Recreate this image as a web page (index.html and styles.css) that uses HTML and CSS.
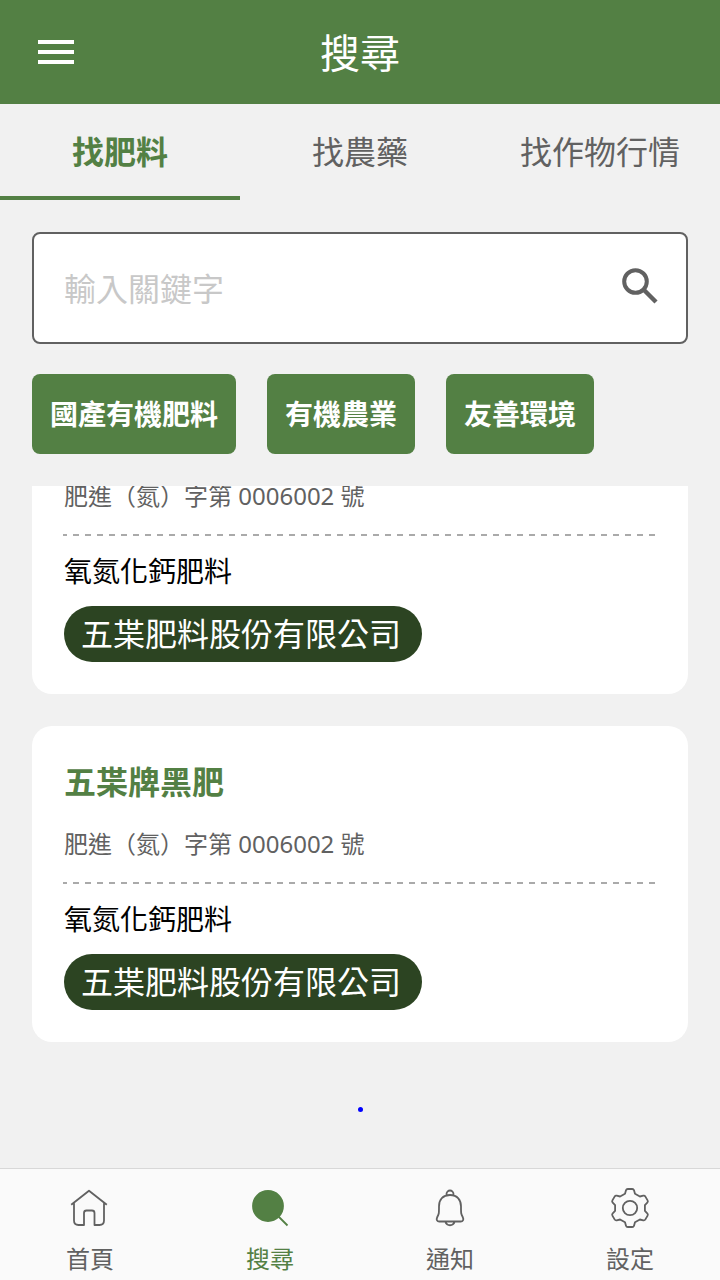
FILE: index.html
```html
<!DOCTYPE html>
<html lang="zh-Hant">
<head>
<meta charset="utf-8">
<meta name="viewport" content="width=device-width, initial-scale=1">
<title>搜尋</title>
<link rel="stylesheet" href="styles.css">
</head>
<body>
<header class="header">
  <button class="menu-button" type="button" aria-label="選單">
    <svg width="36" height="24" viewBox="0 0 36 24" fill="currentColor"><path d="M0 0h36v4H0zM0 10h36v4H0zM0 20h36v4H0z"/></svg>
  </button>
  <h1 class="title">搜尋</h1>
</header>
<div class="tabs" role="tablist">
  <button class="tab tab-active" type="button" role="tab" aria-selected="true">找肥料</button>
  <button class="tab" type="button" role="tab" aria-selected="false">找農藥</button>
  <button class="tab" type="button" role="tab" aria-selected="false">找作物行情</button>
</div>
<main class="content">
  <form class="search">
    <input class="search-input" type="text" placeholder="輸入關鍵字" aria-label="輸入關鍵字">
    <button class="search-button" type="button" aria-label="搜尋">
      <svg width="36" height="36" viewBox="0 0 36 36" fill="none" stroke="currentColor" stroke-width="4"><circle cx="13.5" cy="13.5" r="11.3"/><path d="M21.5 21.5 34 34" stroke-width="4.4"/></svg>
    </button>
  </form>
  <div class="filters">
    <button class="filter" type="button">國產有機肥料</button>
    <button class="filter" type="button">有機農業</button>
    <button class="filter" type="button">友善環境</button>
  </div>
  <div class="results">
    <article class="card">
      <p class="card-number">肥進（氮）字第 0006002 號</p>
      <div class="divider"></div>
      <p class="card-kind">氧氮化鈣肥料</p>
      <span class="company">五枼肥料股份有限公司</span>
    </article>
    <article class="card">
      <h2 class="card-title">五枼牌黑肥</h2>
      <p class="card-number">肥進（氮）字第 0006002 號</p>
      <div class="divider"></div>
      <p class="card-kind">氧氮化鈣肥料</p>
      <span class="company">五枼肥料股份有限公司</span>
    </article>
    <div class="loader"><span class="loader-dot"></span></div>
  </div>
</main>
<nav class="bottom-nav">
  <a class="nav-item" href="#home">
    <svg class="nav-icon" viewBox="0 0 40 40"><path d="M1.200 16.800 19 2.700l17.800 14.100M4 14.500V32.500q0 4.500 4.500 4.500H14V25q0-2.500 2.500-2.500h5.500q2.500 0 2.500 2.500v12H29.500q4.500 0 4.500-4.500V14.500"/></svg>
    首頁
  </a>
  <a class="nav-item nav-active" href="#search">
    <svg class="nav-icon" viewBox="0 0 40 40"><circle cx="18" cy="18" r="15" fill="currentColor"/><path d="m28 28 9.500 9.500"/></svg>
    搜尋
  </a>
  <a class="nav-item" href="#notice">
    <svg class="nav-icon" viewBox="0 0 40 40"><path d="M16.500 7.500V6a3.500 3.500 0 0 1 7 0v1.500M20 7C12.500 7 9 12 9 18.500c0 7 0 7.500-1.700 10.500-1.500 3 0 4.500 2 4.500h21.400c2 0 3.500-1.500 2-4.500C31 26 31 25.500 31 18.500 31 12 27.500 7 20 7ZM15.300 33.500c1.500 5 7.900 5 9.400 0"/></svg>
    通知
  </a>
  <a class="nav-item" href="#settings">
    <svg class="nav-icon" viewBox="0 0 40 40"><circle cx="20" cy="20" r="7.200"/><path d="M15 5.700 16 2.300Q16.400 1 17.800 1H22.200Q23.600 1 24 2.300L25 5.700 29.900 8.500 33.300 7.700Q34.700 7.400 35.400 8.600L37.600 12.400Q38.300 13.600 37.300 14.600L34.900 17.200V22.800L37.300 25.400Q38.300 26.400 37.600 27.600L35.400 31.400Q34.700 32.600 33.300 32.300L29.900 31.500 25 34.300 24 37.700Q23.600 39 22.200 39H17.800Q16.400 39 16 37.700L15 34.300 10.100 31.500 6.700 32.300Q5.300 32.600 4.600 31.400L2.400 27.600Q1.700 26.400 2.700 25.400L5.100 22.800V17.200L2.700 14.600Q1.700 13.600 2.400 12.400L4.600 8.600Q5.300 7.400 6.700 7.700L10.100 8.500Z"/></svg>
    設定
  </a>
</nav>
</body>
</html>
```
FILE: styles.css
```css
* {
  box-sizing: border-box;
}

body {
  margin: 0;
  height: 100vh;
  display: flex;
  flex-direction: column;
  background: #f1f1f1;
  color: #616161;
  font-family: "Noto Sans", "Noto Sans CJK TC", sans-serif;
}

button,
input {
  margin: 0;
  padding: 0;
  border: 0;
  background: none;
  color: inherit;
  font: inherit;
}

h1,
h2,
p {
  margin: 0;
}

svg {
  display: block;
}

.header {
  display: grid;
  grid-template-columns: 1fr auto 1fr;
  align-items: center;
  height: 104px;
  flex-shrink: 0;
  padding: 0 38px;
  background: #538044;
  color: #fff;
}

.menu-button {
  justify-self: start;
}

.title {
  padding-top: 2px;
  font-size: 40px;
  font-weight: 400;
  line-height: 56px;
}

.tabs {
  display: grid;
  grid-template-columns: repeat(3, 1fr);
  height: 96px;
  flex-shrink: 0;
}

.tab {
  padding-top: 4px;
  border-bottom: 4px solid transparent;
  font-size: 32px;
  line-height: 48px;
  white-space: nowrap;
}

.tab-active {
  border-color: #538044;
  color: #538044;
  font-weight: 700;
}

.content {
  flex: 1;
  min-height: 0;
  display: flex;
  flex-direction: column;
  padding: 32px 32px 0;
}

.search {
  display: flex;
  align-items: center;
  height: 112px;
  flex-shrink: 0;
  padding: 0 28px 0 30px;
  background: #fff;
  border: 2px solid #616161;
  border-radius: 8px;
}

.search-input {
  flex: 1;
  min-width: 0;
  height: 64px;
  font-size: 32px;
  outline: 0;
}

.search-input::placeholder {
  color: #c8c8c8;
  opacity: 1;
}

.search-button {
  padding-bottom: 4px;
}

.filters {
  display: flex;
  gap: 31px;
  padding: 30px 0 32px;
  flex-shrink: 0;
}

.filter {
  height: 80px;
  padding: 0 18px;
  border-radius: 8px;
  background: #538044;
  color: #fff;
  font-size: 28px;
  font-weight: 700;
  line-height: 40px;
}

.results {
  flex: 1;
  min-height: 0;
  display: flex;
  flex-direction: column;
  justify-content: flex-end;
  overflow: hidden;
}

.card {
  flex-shrink: 0;
  margin-top: 32px;
  padding: 32px;
  border-radius: 20px;
  background: #fff;
}

.card-title {
  color: #538044;
  font-size: 32px;
  line-height: 48px;
}

.card-number {
  margin: 20px 0;
  font-size: 24px;
  line-height: 36px;
}

.divider {
  height: 2px;
  margin: 0 -1px;
  background: repeating-linear-gradient(90deg, #aaa 0 4px, transparent 4px 10px, #aaa 10px 12px);
}

.card-kind {
  margin: 14px 0;
  color: #000;
  font-size: 28px;
  line-height: 42px;
}

.company {
  display: block;
  width: fit-content;
  padding: 0 21px 0 17px;
  border-radius: 28px;
  background: #2c4422;
  color: #fff;
  font-size: 32px;
  line-height: 56px;
}

.loader {
  display: flex;
  justify-content: center;
  height: 126px;
  flex-shrink: 0;
  padding-top: 65px;
}

.loader-dot {
  width: 5px;
  height: 5px;
  border-radius: 50%;
  background: #00f;
}

.bottom-nav {
  display: grid;
  grid-template-columns: repeat(4, 1fr);
  height: 112px;
  flex-shrink: 0;
  padding-top: 19px;
  border-top: 1px solid #d8d8d8;
  background: #fafafa;
}

.nav-item {
  display: flex;
  flex-direction: column;
  align-items: center;
  gap: 13px;
  color: #616161;
  font-size: 24px;
  line-height: 36px;
  text-decoration: none;
}

.nav-active {
  color: #538044;
}

.nav-icon {
  width: 40px;
  height: 40px;
  fill: none;
  stroke: currentColor;
  stroke-width: 1.8;
  stroke-linejoin: round;
}
```
